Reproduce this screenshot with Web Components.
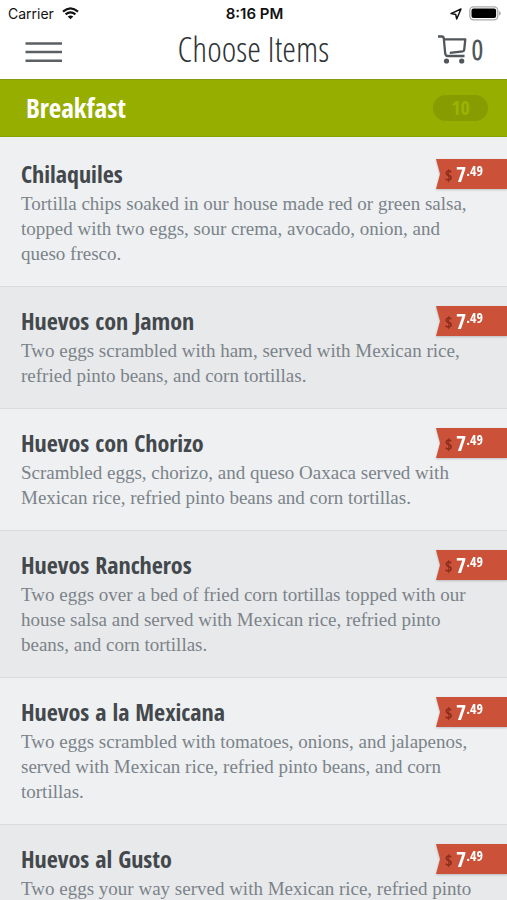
<!DOCTYPE html>
<html lang="en">
<head>
<meta charset="utf-8">
<meta name="viewport" content="width=device-width">
<title>Choose Items</title>
<style>
html, body { height: 100%; margin: 0; }
body {
  --ink: #43484c;
  --condensed: "Open Sans Condensed", "Roboto Condensed", sans-serif;
  --condensed-light: "Open Sans Condensed Light", "Roboto Condensed", sans-serif;
  --book: "Liberation Serif", serif;
  background: #fff;
  color: var(--ink);
  font-family: "Liberation Sans", sans-serif;
}
</style>
</head>
<body>
<menu-screen>
  <status-bar slot="top" carrier="Carrier" time="8:16 PM"></status-bar>
  <nav-header slot="top" count="0">Choose Items</nav-header>
  <category-bar slot="top" count="10">Breakfast</category-bar>
  <menu-item name="Chilaquiles" dollars="7" cents="49">Tortilla chips soaked in our house made red or green salsa, topped with two eggs, sour crema, avocado, onion, and queso fresco.</menu-item>
  <menu-item name="Huevos con Jamon" dollars="7" cents="49">Two eggs scrambled with ham, served with Mexican rice, refried pinto beans, and corn tortillas.</menu-item>
  <menu-item name="Huevos con Chorizo" dollars="7" cents="49">Scrambled eggs, chorizo, and queso Oaxaca served with Mexican rice, refried pinto beans and corn tortillas.</menu-item>
  <menu-item name="Huevos Rancheros" dollars="7" cents="49">Two eggs over a bed of fried corn tortillas topped with our house salsa and served with Mexican rice, refried pinto beans, and corn tortillas.</menu-item>
  <menu-item name="Huevos a la Mexicana" dollars="7" cents="49">Two eggs scrambled with tomatoes, onions, and jalapenos, served with Mexican rice, refried pinto beans, and corn tortillas.</menu-item>
  <menu-item name="Huevos al Gusto" dollars="7" cents="49">Two eggs your way served with Mexican rice, refried pinto</menu-item>
</menu-screen>
<script>
const define = (tag, render) => customElements.define(tag, class extends HTMLElement {
  connectedCallback() {
    if (this.shadowRoot) return;
    this.attachShadow({ mode: "open" }).innerHTML = render(this);
  }
});

define("menu-screen", () => `
<style>
:host { display: flex; flex-direction: column; height: 100vh; overflow: hidden; }
main { flex: 1; min-height: 0; overflow: hidden; padding-top: 3px; background: #eef0f2; }
</style>
<slot name="top"></slot>
<main><slot></slot></main>`);

define("status-bar", el => `
<style>
:host { display: grid; grid-template-columns: 1fr auto 1fr; align-items: center; height: 27px; flex: none;
  padding: 0 6px 0 8px; color: #111; font: 14px "Inter", "Liberation Sans", sans-serif; }
.left, .right { display: flex; align-items: center; gap: 8px; }
.right { justify-content: flex-end; gap: 7px; }
b { font-size: 15px; font-weight: 600; }
svg { display: block; }
</style>
<span class="left">${el.getAttribute("carrier")}
<svg width="17" height="13" viewBox="0 0 17 13" fill="none" stroke="#111" stroke-width="2.2"><path d="M1 4.6Q8.500-2 16 4.600M3.600 7.400Q8.500 3.200 13.400 7.400"/><path d="M8.500 12.300L5.700 9.500Q8.500 7.300 11.300 9.500Z" fill="#111" stroke="none"/></svg></span>
<b>${el.getAttribute("time")}</b>
<span class="right">
<svg width="12" height="12" viewBox="0 0 12 12" fill="none" stroke="#111" stroke-width="1.500" stroke-linejoin="round"><path d="M11 1L6.700 11L5.700 6.400L1 5.600Z"/></svg>
<svg width="32" height="15" viewBox="0 0 32 15"><rect x=".8" y=".8" width="28" height="13" rx="3.800" fill="#fff" stroke="#aaa" stroke-width="1.300"/><rect x="2.500" y="2.500" width="24.600" height="9.600" rx="2" fill="#000"/><path d="M30.200 5v4.600q1.400-.6 1.400-2.300T30.200 5Z" fill="#999"/></svg>
</span>`);

define("nav-header", el => `
<style>
:host { display: grid; grid-template-columns: 1fr auto 1fr; align-items: center; height: 52px; flex: none;
  box-sizing: border-box; padding: 0 24px 8px; color: #50565a; }
h1 { margin: 0; color: #2e3337; font: 400 35px/44px var(--condensed-light); }
button { display: flex; align-items: center; gap: 5px; padding: 0; border: 0; background: none; color: inherit; font: 700 28px/32px var(--condensed-light); }
.menu { justify-self: start; padding-top: 6px; }
.cart { justify-self: end; }
svg { display: block; }
</style>
<button class="menu" aria-label="Menu"><svg width="40" height="24" viewBox="0 0 40 24" stroke="#5b6064" stroke-width="2.400"><path d="M1.500 3.500H38M1.500 12H38M1.500 20.700H38"/></svg></button>
<h1><slot></slot></h1>
<button class="cart" aria-label="Cart"><svg width="29" height="30" viewBox="0 0 29 30" fill="none" stroke="#50565a" stroke-width="2.300" stroke-linejoin="round"><path d="M0 2.500H4Q5.500 2.500 5.800 4.500L7.200 19.400Q7.500 22 9.800 22H26.500M6.200 5.300H27.300L26.200 15.800Q26 17.200 24.800 17.300L11.800 18.800"/><g fill="#50565a" stroke="none"><circle cx="8.500" cy="27" r="2.600"/><circle cx="23.700" cy="27" r="2.600"/></g></svg>${el.getAttribute("count")}</button>`);

define("category-bar", el => `
<style>
:host { display: flex; align-items: center; justify-content: space-between; height: 58px; flex: none; box-sizing: border-box;
  padding: 0 19px 0 26px; background: #96ae00; border-top: 1px solid #879b12; border-bottom: 1px solid #8ba300; color: #fff; }
h2 { margin: 0; font: 700 27px/32px var(--condensed); }
span { width: 55px; border-radius: 13px; background: #869c00; color: #9bb400; text-align: center; font: 700 20px/26px var(--condensed); }
</style>
<h2><slot></slot></h2><span>${el.getAttribute("count")}</span>`);

define("price-tag", el => `
<style>
:host { display: block; filter: drop-shadow(0 1px 1px #0003); }
div { display: flex; align-items: flex-start; box-sizing: border-box; width: 71px; height: 30px; padding-left: 9px;
  background: #cb5239; color: #fff; clip-path: polygon(0 0, 100% 0, 100% 100%, 0 100%, 4px 50%); font: 700 22px/28px var(--condensed); }
.sign { width: 11px; color: #8d2d1c; font-size: 16px; line-height: 32px; }
.cents { font-size: 14px; line-height: 24px; }
</style>
<div><span class="sign">$</span><span>${el.getAttribute("dollars")}</span><span class="cents">.${el.getAttribute("cents")}</span></div>`);

define("menu-item", el => `
<style>
:host { display: block; box-sizing: border-box; padding: 19px 0 20px 21px; background: #eef0f2; border-bottom: 1px solid #d9dbdd; }
:host(:nth-of-type(even)) { background: #e8e9eb; }
header { display: flex; justify-content: space-between; align-items: flex-start; height: 32px; }
h3 { margin: 0; font: 700 24px/30px var(--condensed); }
p { margin: 0; padding-right: 34px; color: #7b8389; font: 19px/25px var(--book); }
</style>
<header><h3>${el.getAttribute("name")}</h3><price-tag dollars="${el.getAttribute("dollars")}" cents="${el.getAttribute("cents")}"></price-tag></header>
<p><slot></slot></p>`);
</script>
</body>
</html>
